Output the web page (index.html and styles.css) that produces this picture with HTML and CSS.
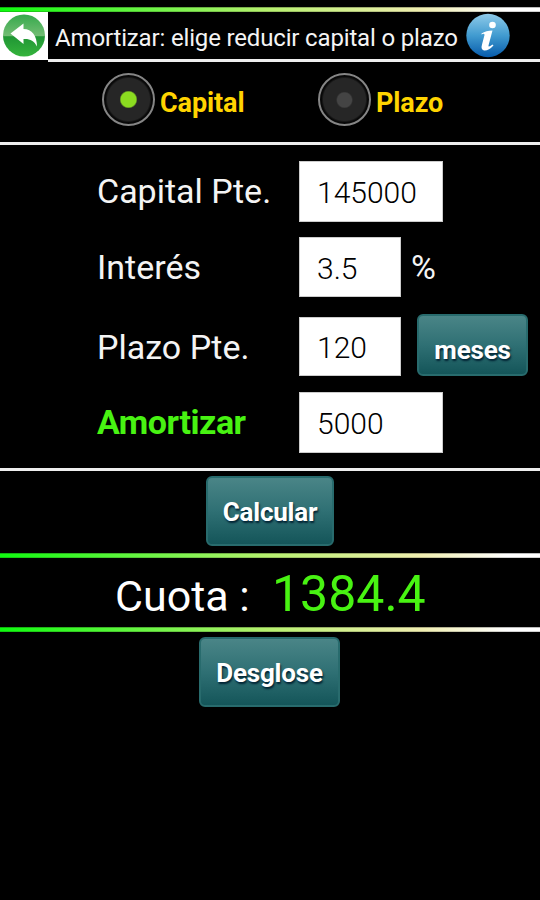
FILE: index.html
```html
<!DOCTYPE html>
<html lang="es">
<head>
    <meta charset="UTF-8">
    <meta name="viewport" content="width=device-width, initial-scale=1.0">
    <title>Amortizar</title>
    <link rel="stylesheet" href="styles.css">
</head>
<body>
    <div class="green-line"></div>
    <header class="header">
        <a class="back-btn" href="#" aria-label="Volver">
            <svg width="48" height="48" viewBox="0 0 48 48">
                <defs>
                    <linearGradient id="backFill" x1="0" y1="0" x2="0" y2="1">
                        <stop offset="0" stop-color="#35a94c"/>
                        <stop offset="0.5" stop-color="#72bd73"/>
                        <stop offset="0.53" stop-color="#209634"/>
                        <stop offset="1" stop-color="#35b43c"/>
                    </linearGradient>
                </defs>
                <circle cx="24" cy="23.5" r="21" fill="url(#backFill)"/>
                <path d="M10.5 21.500 L23.500 11.500 V17 C32 17 37 24 37 34.500 C34 28.500 29.500 26.500 23.500 27 V32 Z" fill="#fff"/>
            </svg>
        </a>
        <h1 class="title">Amortizar: elige reducir capital o plazo</h1>
        <a class="info-btn" href="#" aria-label="Información">
            <svg width="44" height="45" viewBox="0 0 44 45">
                <defs>
                    <linearGradient id="infoFill" x1="0" y1="0" x2="0" y2="1">
                        <stop offset="0" stop-color="#8fcbe9"/>
                        <stop offset="0.5" stop-color="#419bd0"/>
                        <stop offset="1" stop-color="#075bab"/>
                    </linearGradient>
                </defs>
                <circle cx="22" cy="22.5" r="21.7" fill="url(#infoFill)"/>
                <circle cx="26.5" cy="12" r="3.3" fill="#fff"/>
                <path d="M15.5 20.5 Q20 17.5 26.5 17.5 L22.5 32.5 Q22 35 26.5 31.5 L27.5 32.5 Q22.5 38 18 37.5 Q14.5 36.5 16 31.5 L18.5 22 Q18.5 20 15.5 21.5 Z" fill="#fff"/>
            </svg>
        </a>
    </header>

    <div class="options">
        <label class="option">
            <input class="radio" type="radio" name="modo" checked>
            <span class="option-text">Capital</span>
        </label>
        <label class="option">
            <input class="radio" type="radio" name="modo">
            <span class="option-text">Plazo</span>
        </label>
    </div>

    <form class="form" id="form">
        <label class="field-label" for="capital">Capital Pte.</label>
        <div class="field"><input class="box" id="capital" value="145000"></div>

        <label class="field-label" for="interes">Interés</label>
        <div class="field interest-field"><input class="box small" id="interes" value="3.5"><span class="percent">%</span></div>

        <label class="field-label" for="plazo">Plazo Pte.</label>
        <div class="field term-field"><input class="box small" id="plazo" value="120"><button class="btn months-btn" type="button">meses</button></div>

        <label class="field-label amortizar" for="amortizar">Amortizar</label>
        <div class="field"><input class="box" id="amortizar" value="5000"></div>
    </form>

    <div class="calc-section">
        <button class="btn calc-btn" type="submit" form="form">Calcular</button>
    </div>
    <div class="green-line"></div>
    <div class="result">
        <span class="result-label">Cuota :</span>
        <span class="result-value">1384.4</span>
    </div>
    <div class="green-line"></div>
    <div class="detail-section">
        <button class="btn detail-btn" type="button">Desglose</button>
    </div>
</body>
</html>
```
FILE: styles.css
```css
* {
    box-sizing: border-box;
}
body {
    margin: 0;
    padding-top: 7px;
    min-height: 900px;
    background-color: #000;
    color: #f4f4f4;
    font-family: Roboto, sans-serif;
}
.green-line {
    height: 5px;
    background: linear-gradient(to bottom, rgba(0, 0, 0, 0.4), transparent 30%, transparent 75%, rgba(0, 0, 0, 0.3)),
        linear-gradient(to right, #10fa10, #b8f070 50%, #f0eeb0 78%, #fff 94%);
}
.header {
    display: flex;
    height: 50px;
    background: linear-gradient(#eee, #eee) bottom / 100% 3px no-repeat;
}
.back-btn {
    width: 48px;
    height: 50px;
    background: linear-gradient(#fff, #fff) top / 100% 48px no-repeat #000;
}
.back-btn svg,
.info-btn svg {
    display: block;
}
.title {
    width: 411px;
    margin: 0;
    padding-left: 7px;
    font-size: 24px;
    font-weight: 400;
    letter-spacing: -0.16px;
    line-height: 53px;
    white-space: nowrap;
}
.info-btn {
    padding: 1px 0 0 7px;
}
.options {
    display: flex;
    height: 83px;
    padding: 11px 0 0 102px;
    border-bottom: 3px solid #eee;
}
.option {
    display: flex;
    width: 216px;
    height: 53px;
}
.radio {
    appearance: none;
    width: 53px;
    height: 53px;
    margin: 0 5px 0 0;
    border: 2px solid #858585;
    border-radius: 50%;
    background: radial-gradient(circle at 50% 51%, #444 7px, transparent 8.5px),
        radial-gradient(circle, #262626 21px, #080808 23px);
}
.radio:checked {
    background: radial-gradient(circle at 50% 50%, #8bdc20 7.5px, transparent 9px),
        radial-gradient(circle, #262626 21px, #080808 23px);
}
.option-text {
    color: #ffd400;
    font-size: 27px;
    font-weight: 700;
    letter-spacing: -0.1px;
    line-height: 60px;
}
.form {
    display: grid;
    grid-template-columns: 201px 1fr;
    grid-template-rows: 76px 80px 75px 61px;
    height: 326px;
    padding: 16px 0 0 98px;
    border-bottom: 3px solid #eee;
}
.field-label {
    margin-left: -1px;
    font-size: 34px;
    line-height: 61px;
}
.amortizar {
    color: #48f312;
    font-weight: 700;
    letter-spacing: -0.45px;
}
.field {
    display: flex;
    height: 61px;
}
.interest-field {
    height: 60px;
}
.term-field {
    height: 59px;
}
.box {
    width: 144px;
    height: 100%;
    padding: 2px 0 0 17px;
    border: 1px solid #ccc;
    border-radius: 0;
    background-color: #fff;
    color: #000;
    font: 300 30px Roboto, sans-serif;
}
.small {
    width: 102px;
}
.percent {
    margin-left: 10px;
    font-size: 34px;
    letter-spacing: -1px;
    line-height: 61px;
}
.btn {
    padding: 2px 0 0;
    border: 2px solid #286b6d;
    border-radius: 6px;
    background: linear-gradient(#4a8587, #2f7074 50%, #145559);
    color: #fff;
    font: 700 26px Roboto, sans-serif;
    letter-spacing: -0.2px;
    text-shadow: 1px 2px 2px #023;
}
.months-btn {
    width: 111px;
    height: 62px;
    margin: -3px 0 0 16px;
    padding-top: 10px;
}
.calc-section {
    display: flex;
    height: 82px;
    padding: 5px 0 0 206px;
}
.calc-btn {
    width: 128px;
    height: 70px;
}
.result {
    display: flex;
    align-items: baseline;
    height: 69px;
    padding-left: 115px;
    line-height: 73px;
}
.result-label {
    width: 157px;
    color: #fff;
    font-size: 43px;
}
.result-value {
    color: #48f312;
    font-size: 50px;
}
.detail-section {
    display: flex;
    padding: 5px 0 0 199px;
}
.detail-btn {
    width: 141px;
    height: 70px;
}
```
